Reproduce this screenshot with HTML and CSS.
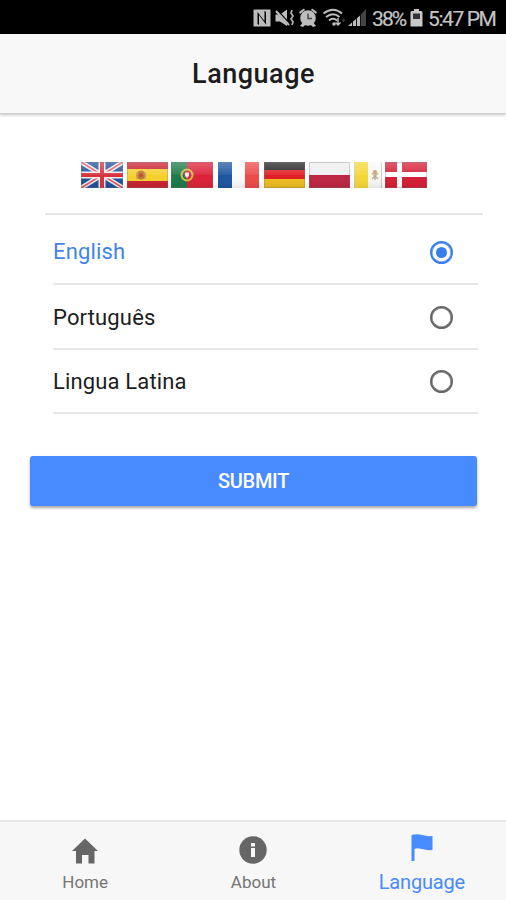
FILE: index.html
```html
<!DOCTYPE html>
<html lang="en">
<head>
<meta charset="utf-8">
<title>Language</title>
<link rel="stylesheet" href="styles.css">
</head>
<body>
<div class="status">
  <svg class="status-icons" width="119" height="34" viewBox="250 0 119 34">
    <g fill="#bdbdbd">
      <path fill-rule="evenodd" d="M254 9.500H270.500V26.500H253.500V10ZM257.500 12V24L259 25V15L266 24.500V12L264.500 11V21Z"/>
      <path d="M275.500 14.500H280L287 9.500V26L280 21.500H275.500Z"/>
      <path d="M299 12L304 8.500L305 10L300 14ZM317 12L312 8.500L311 10L316 14Z"/>
      <circle cx="308" cy="18" r="7.800"/>
      <path d="M300 26L303 22L306 24L303 27ZM316 26L313 22L310 24L313 27Z"/>
      <path d="M348 26L360 15.500V26Z"/>
    </g>
    <path d="M276 10L290 25" stroke="#000" stroke-width="3"/>
    <path d="M276 11L289 25" stroke="#bdbdbd" stroke-width="2"/>
    <path d="M292 10l-1 3 2 3-2 3 2 3-1 3" fill="none" stroke="#aaa" stroke-width="1.800"/>
    <path d="M308 13.500V18.500H312" fill="none" stroke="#444" stroke-width="1.400"/>
    <g fill="none" stroke="#bdbdbd" stroke-width="2">
      <path d="M323.500 13.500Q333 6 342 13.500M326 17Q333 11.500 339.500 17M329 20.500Q333 17 337 20.500"/>
      <path d="M338 18V25M335.500 22.500L338 25L340.500 22.500" stroke-width="1.500"/>
    </g>
    <circle cx="334" cy="24" r="1.800" fill="#bdbdbd"/>
    <circle cx="343.500" cy="20.500" r="1.300" fill="#444"/>
    <path d="M360 15.500L366 9V26H360Z" fill="#444"/>
    <path d="M352.500 20V26M356.500 17V26M360.500 13V26" stroke="#111"/>
  </svg>
  <span class="battery-text">38%</span>
  <svg class="battery" width="13" height="19" viewBox="0 0 13 19"><path d="M4 0H9V2H11.500L12.500 3V17.500H.5V3L1.500 2H4Z" fill="#c8c8c8"/><path d="M3 4.500H10V10H3Z" fill="#333"/></svg>
  <span class="clock">5:47 PM</span>
</div>
<header class="header"><h1>Language</h1></header>
<main class="content">
  <div class="flags">
    <svg width="346" height="26" viewBox="0 0 346 26">
      <defs>
        <linearGradient id="shine" x2="0" y2="1"><stop offset="0" stop-color="#fff" stop-opacity=".28"/><stop offset=".48" stop-color="#fff" stop-opacity=".08"/><stop offset=".5" stop-color="#fff" stop-opacity="0"/><stop offset="1" stop-color="#000" stop-opacity=".08"/></linearGradient>
        <clipPath id="uk"><path d="M0 0H42V26H0Z"/></clipPath>
      </defs>
      <g clip-path="url(#uk)">
        <path fill="#1f4f9b" d="M0 0H42V26H0Z"/>
        <path d="M0 0L42 26M42 0L0 26" stroke="#eee" stroke-width="4.500"/>
        <path d="M0 0L42 26M42 0L0 26" stroke="#df5860" stroke-width="1.600"/>
        <path d="M21 0V26M0 13H42" stroke="#f4eeee" stroke-width="7"/>
        <path d="M21 0V26M0 13H42" stroke="#d6303c" stroke-width="4"/>
      </g>
      <g transform="translate(46)"><path fill="#c9202f" d="M0 0H41V26H0Z"/><path fill="#f7cf2c" d="M0 7H41V19H0Z"/><circle cx="14" cy="13" r="4.500" fill="#b97832"/><path d="M10 10V17M18 10V17" stroke="#c99a58" stroke-width="1.500"/><circle cx="14" cy="13" r="2" fill="#c84535"/></g>
      <g transform="translate(90)"><path fill="#dc2038" d="M0 0H42V26H0Z"/><path fill="#187a48" d="M0 0H16V26H0Z"/><circle cx="16" cy="13" r="5.500" fill="none" stroke="#d9bd45" stroke-width="2"/><path fill="#eee" stroke="#cf293a" d="M13.500 10H18.500V14L16 16.500L13.500 14Z"/></g>
      <g transform="translate(137)"><path fill="#fbfbfb" d="M0 0H41V26H0Z"/><path fill="#1b559f" d="M0 0H14V26H0Z"/><path fill="#ec4a48" d="M27 0H41V26H27Z"/></g>
      <g transform="translate(183)"><path fill="#222" d="M0 0H41V9H0Z"/><path fill="#e11d24" d="M0 8H41V17H0Z"/><path fill="#edbc20" d="M0 17H41V26H0Z"/></g>
      <g transform="translate(228)"><path fill="#eee" d="M0 0H41V13H0Z"/><path fill="#bd2440" d="M0 13H41V26H0Z"/></g>
      <g transform="translate(273)"><path fill="#f8f8f7" d="M0 0H28V26H0Z"/><path fill="#f4d735" d="M1 0H14V26H1Z"/><path d="M18 17L24 11M24 17L18 11M21 8V18" stroke="#c4b082" stroke-width="1.500"/><circle cx="21" cy="10" r="2" fill="#c59c6a"/><path d="M.5 0V26M27.500 0V26" stroke="#c9c9c9"/></g>
      <g transform="translate(304)"><path fill="#d51d35" d="M0 0H42V26H0Z"/><path d="M14.500 0V26M0 12.500H42" stroke="#fff" stroke-width="5"/></g>
      <path fill="url(#shine)" d="M0 0H346V26H0Z"/>
      <path d="M.5.5H41.500V25.500H.5ZM46.500.5H86.500V25.500H46.500ZM90.500.5H131.500V25.500H90.500ZM183.500.5H223.500V25.500H183.500ZM228.500.5H268.500V25.500H228.500ZM304.500.5H345.500V25.500H304.500Z" fill="none" stroke="#777" stroke-opacity=".3"/>
    </svg>
  </div>
  <div class="list">
    <label class="item selected"><span class="name">English</span><span class="radio"></span></label>
    <label class="item"><span class="name">Português</span><span class="radio"></span></label>
    <label class="item"><span class="name">Lingua Latina</span><span class="radio"></span></label>
  </div>
  <button class="submit">SUBMIT</button>
</main>
<nav class="tabs">
  <a class="tab"><svg width="26" height="26" viewBox="0 0 26 26"><path fill="#666" d="M13 .5L26 13H22.500V25.500H16.500V17H10V25.500H4V13H0Z"/></svg><span>Home</span></a>
  <a class="tab"><svg width="28" height="28" viewBox="0 0 28 28"><circle cx="14" cy="14" r="13.700" fill="#666"/><path fill="#f7f7f7" d="M12 7H16V10.500H12ZM12 12H16V21H12Z"/></svg><span>About</span></a>
  <a class="tab active"><svg width="22" height="27" viewBox="0 0 22 27"><path fill="#488aff" d="M.5 1Q6-.5 11 1T21.500 2V16Q16 16.500 11 15T3.500 15V27H.5Z"/></svg><span>Language</span></a>
</nav>
</body>
</html>
```
FILE: styles.css
```css
* { box-sizing: border-box; }
body {
  margin: 0;
  height: 900px;
  display: flex;
  flex-direction: column;
  overflow: hidden;
  background: #fff;
  color: #1c1c1c;
  font-family: Roboto, "Liberation Sans", sans-serif;
}
.status {
  height: 34px;
  flex: none;
  display: flex;
  align-items: center;
  padding-left: 250px;
  background: #000;
  color: #c4c4c4;
  font-size: 21px;
  line-height: 34px;
  white-space: nowrap;
}
.status-icons { flex: none; }
.battery-text { width: 34px; margin-left: 3px; padding-top: 4px; letter-spacing: -1.9px; }
.battery-text, .clock { -webkit-text-stroke: .2px #c4c4c4; }
.battery-text { letter-spacing: -1.9px; }
.battery { margin: 2px 5px 0 4px; flex: none; }
.clock { padding-top: 4px; letter-spacing: -1.4px; }
.header {
  height: 80px;
  flex: none;
  display: flex;
  align-items: center;
  justify-content: center;
  padding-left: 1px;
  background: #f8f8f8;
  border-bottom: 1px solid #d2d2d2;
  box-shadow: 0 1px 3px rgba(0, 0, 0, .25);
}
h1 { margin: 0; font-size: 27px; line-height: 32px; font-weight: 500; letter-spacing: .5px; }
.content { flex: 1; padding-top: 48px; }
.flags {
  height: 53px;
  margin: 0 23px 0 45px;
  padding-left: 36px;
  border-bottom: 2px solid #e5e5e5;
}
.flags svg { display: block; }
.list { margin: 0 28px 0 53px; }
.item {
  height: 64.5px;
  display: flex;
  align-items: center;
  justify-content: space-between;
  padding: 2px 25.500px 0 0;
  border-bottom: 2px solid #e7e7e7;
  font-size: 22px;
}
.item:first-child { height: 70px; padding-top: 6px; }
.name { letter-spacing: .15px; }
.selected .name { color: #4285e8; margin-top: -2px; }
.radio {
  width: 23px;
  height: 23px;
  border: 2.500px solid #666;
  border-radius: 50%;
  display: flex;
  align-items: center;
  justify-content: center;
  box-shadow: inset 0 0 0 .5px #666;
}
.selected .radio { border-color: #397fec; box-shadow: inset 0 0 0 .5px #397fec; }
.selected .radio::after { content: ""; width: 11px; height: 11px; border-radius: 50%; background: #397fec; }
.submit {
  display: block;
  width: 447px;
  height: 50px;
  margin: 42px 0 0 30px;
  padding: 0;
  border: 0;
  border-radius: 3px;
  background: #488aff;
  box-shadow: 0 2px 3px rgba(0, 0, 0, .35);
  color: #fff;
  font: 500 20px/48px Roboto, sans-serif;
  letter-spacing: -.3px;
}
.tabs {
  height: 80px;
  flex: none;
  display: grid;
  grid-template-columns: repeat(3, 1fr);
  padding-left: 1px;
  background: #f7f7f7;
  border-top: 2px solid #e8e8e8;
  color: #757575;
  font-size: 17px;
}
.tab {
  display: flex;
  flex-direction: column;
  align-items: center;
  justify-content: flex-end;
  gap: 7px;
  padding-bottom: 7px;
  line-height: 22px;
}
.tab.active { color: #488aff; font-size: 20px; letter-spacing: -.2px; gap: 10px; }
```
